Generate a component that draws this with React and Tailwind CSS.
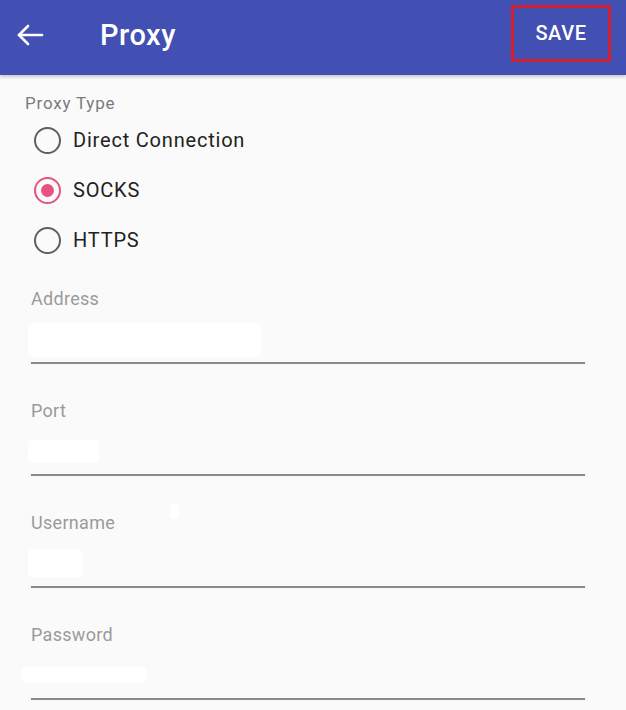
import React from "react";

function Radio({ checked, label }) {
  return (
    <div className="flex h-[50px] items-center">
      <div
        className={
          "flex h-[27px] w-[27px] items-center justify-center rounded-full border-[2.5px] " +
          (checked ? "border-[#e8527f]" : "border-[#5f5f5f]")
        }
      >
        {checked && <div className="h-[13px] w-[13px] rounded-full bg-[#e8527f]" />}
      </div>
      <span className="ml-[12px] text-[20px] leading-none tracking-[0.8px] text-[#222]">{label}</span>
    </div>
  );
}

function Field({ label, children, labelExtra }) {
  return (
    <div className="flex h-[112px] flex-col">
      <div className="relative h-[24px] text-[18px] leading-[24px] tracking-[0.3px] text-[#9a9a9a]">
        {label}
        {labelExtra}
      </div>
      <div className="relative h-[51px]">{children}</div>
      <div className="h-[2px] bg-[#8a8a8a]" />
    </div>
  );
}

export default function App() {
  return (
    <div
      className="h-[710px] w-[626px] overflow-hidden bg-[#fafafa]"
      style={{ fontFamily: "Roboto, 'Noto Sans', sans-serif" }}
    >
      <div className="flex h-[75px] items-center bg-[#4150b2] shadow-[0_2px_3px_rgba(0,0,0,0.2)]">
        <svg
          viewBox="0 0 28 24"
          className="mb-[5px] ml-[16px] h-[24px] w-[28px]"
          fill="none"
          stroke="white"
          strokeWidth="2.6"
          strokeLinecap="round"
          strokeLinejoin="round"
        >
          <path d="M3 12H26" />
          <path d="M12 3L3 12L12 21" />
        </svg>
        <div className="mb-[4px] ml-[56px] text-[29px] font-medium tracking-[0.5px] text-white">Proxy</div>
        <div className="mb-[9px] ml-auto mr-[15px] flex h-[57px] w-[100px] items-center justify-center border-[3px] border-[#d0202f]">
          <span className="text-[20px] font-medium tracking-[0.6px] text-white">SAVE</span>
        </div>
      </div>
      <div className="pl-[25px] pt-[18px]">
        <div className="text-[17px] leading-[20px] tracking-[0.8px] text-[#7a7a7a]">Proxy Type</div>
        <div className="ml-[9px] mt-[2px] flex flex-col">
          <Radio label="Direct Connection" />
          <Radio checked label="SOCKS" />
          <Radio label="HTTPS" />
        </div>
      </div>
      <div className="ml-[31px] mr-[41px] mt-[22px] flex flex-col">
        <Field label="Address">
          <div className="absolute left-[-3px] top-[12px] h-[34px] w-[234px] rounded-[6px] bg-white" />
        </Field>
        <Field label="Port">
          <div className="absolute left-[-3px] top-[17px] h-[23px] w-[71px] rounded-[4px] bg-white" />
        </Field>
        <Field
          label="Username"
          labelExtra={<div className="absolute left-[139px] top-[-8px] h-[16px] w-[9px] rounded-full bg-white" />}
        >
          <div className="absolute left-[-3px] top-[15px] h-[27px] w-[54px] rounded-[4px] bg-white" />
        </Field>
        <Field label="Password">
          <div className="absolute left-[-9px] top-[20px] h-[15px] w-[124px] rounded-[4px] bg-white" />
        </Field>
      </div>
    </div>
  );
}
